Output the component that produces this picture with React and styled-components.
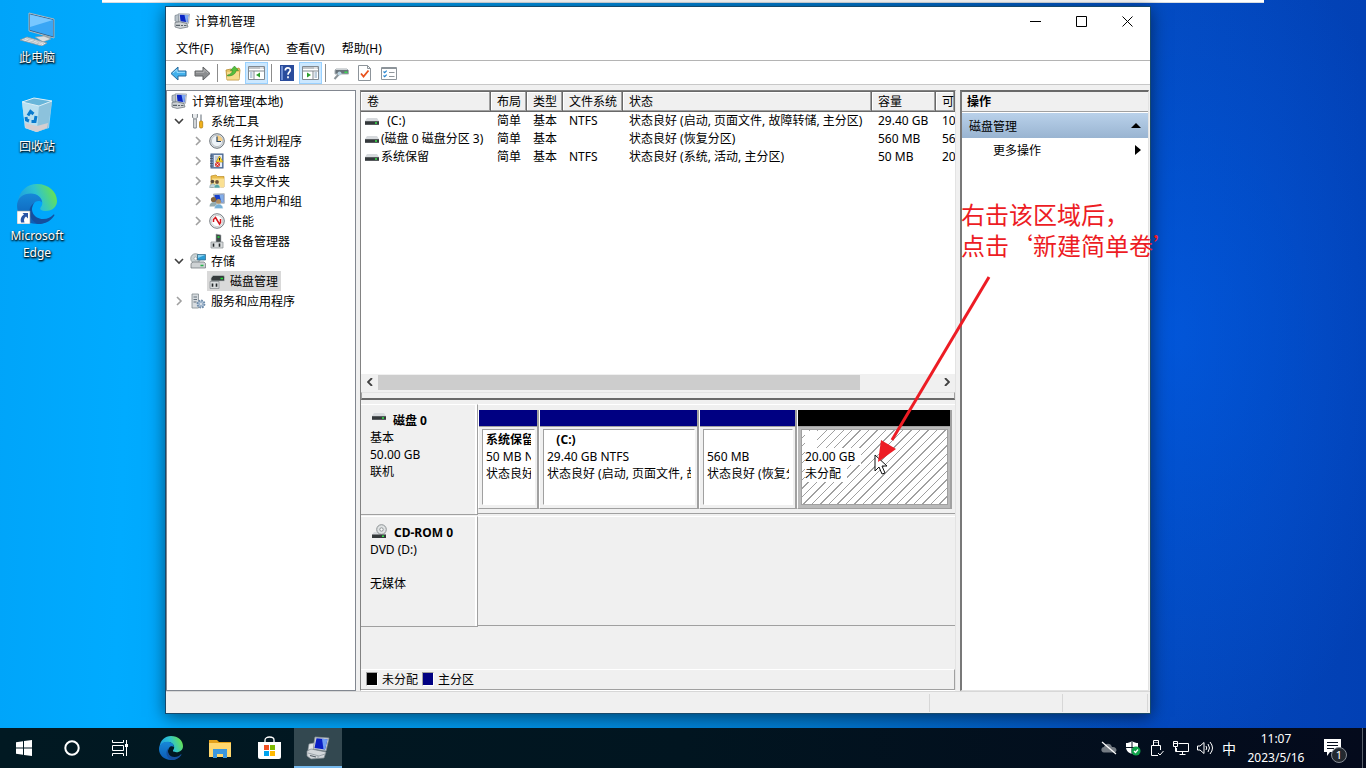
import React from "react";
import styled, { createGlobalStyle } from "styled-components";

const GlobalStyle = createGlobalStyle`
  * {
    box-sizing: border-box;
  }
  body {
    margin: 0;
    font-family: "Noto Sans", "Noto Sans CJK SC", sans-serif;
    font-size: 12px;
    color: #000;
  }
  button {
    font: inherit;
    color: inherit;
    border: 0;
    padding: 0;
    background: none;
  }
  svg {
    display: block;
    flex: none;
  }
`;

/* ---------- desktop ---------- */

const Screen = styled.div`
  min-height: 100vh;
  display: flex;
  flex-direction: column;
`;

const Desktop = styled.main`
  position: relative;
  flex: 1;
  min-height: 640px;
  overflow: hidden;
  background: radial-gradient(
      ellipse 260px 420px at 86% 46%,
      rgba(0, 100, 245, 0.5),
      transparent
    ),
    linear-gradient(
      92deg,
      #00a4f9 0%,
      #00abff 10%,
      #0098ea 32%,
      #0078cc 60%,
      #0348bc 84%,
      #0240b4 100%
    );
`;

const TopStrip = styled.div`
  height: 3px;
  margin: 0 102px;
  background: #fff;
  border-bottom: 1px solid #d8dde2;
`;

const Shortcuts = styled.nav`
  width: 74px;
  display: flex;
  flex-direction: column;
  gap: 21px;
  padding-top: 3px;
`;

const Shortcut = styled.button`
  min-height: 68px;
  display: flex;
  flex-direction: column;
  align-items: center;
  gap: 3px;
  color: #fff;
  line-height: 17px;
  text-shadow: 1px 1px 2px #000, 0 1px 2px #000;
`;

const Annotation = styled.p`
  position: absolute;
  top: 191px;
  right: -30px;
  width: 219px;
  margin: 0;
  color: #ed1c24;
  font-family: "Noto Sans CJK SC", sans-serif;
  font-size: 24px;
  line-height: 31px;
  white-space: nowrap;
`;

const Pointer = styled.svg`
  position: absolute;
  top: 264px;
  right: 156px;
`;

/* ---------- window ---------- */

const Window = styled.section`
  position: absolute;
  top: 6px;
  right: 215px;
  bottom: 14px;
  left: 165px;
  display: flex;
  flex-direction: column;
  background: #f0f0f0;
  border: 1px solid #17496b;
  box-shadow: 0 3px 16px rgba(0, 0, 0, 0.5);
`;

const TitleBar = styled.header`
  height: 30px;
  display: flex;
  align-items: center;
  gap: 5px;
  padding: 0 0 2px 8px;
  background: #fff;
`;

const Title = styled.h1`
  flex: 1;
  margin: 0;
  font-size: 12px;
  font-weight: 400;
`;

const CaptionButton = styled.button`
  width: 46px;
  height: 28px;
  margin-left: -5px;
  display: grid;
  place-items: center;
`;

const MenuBar = styled.nav`
  height: 23px;
  display: flex;
  gap: 1px;
  padding: 0 0 2px 2px;
  background: #fff;
`;

const MenuItem = styled.button`
  padding: 0 8px;
`;

const ToolBar = styled.div`
  height: 25px;
  display: flex;
  align-items: center;
  gap: 1px;
  padding: 1px 0 0 1px;
  background: #fff;
  border-top: 1px solid #b4b4b4;
  border-bottom: 1px solid #c8c8c8;
`;

const ToolButton = styled.button`
  width: 23px;
  height: 22px;
  display: grid;
  place-items: center;
  background: ${(props) => (props.$active ? "#cce8ff" : "transparent")};
  border: 1px solid ${(props) => (props.$active ? "#99d1ff" : "transparent")};
`;

const ToolSeparator = styled.span`
  width: 1px;
  height: 18px;
  margin: 0 2px;
  background: #8c8c8c;
`;

const Panes = styled.div`
  flex: 1;
  min-height: 0;
  display: grid;
  grid-template-columns: 190px minmax(0, 1fr) 189px;
  gap: 4px;
  padding: 5px 1px 0 0;
`;

const StatusBar = styled.footer`
  height: 22px;
  display: flex;
  justify-content: flex-end;
  padding: 2px 2px 1px 0;
  border-top: 1px solid #d7d7d7;
`;

const StatusCell = styled.span`
  width: ${(props) => props.$width}px;
  border-right: 1px solid #d7d7d7;
`;

/* ---------- tree ---------- */

const Tree = styled.ul`
  margin: 0;
  padding: 0;
  list-style: none;
  background: #fff;
  border: 1px solid #828790;
`;

const TreeRow = styled.li`
  height: 20px;
  display: flex;
  padding-left: ${(props) => (props.$level > 1 ? 21 : 2)}px;
`;

const Twisty = styled.button`
  width: 19px;
  display: grid;
  place-items: center;
`;

const TreeItem = styled.button`
  display: flex;
  align-items: center;
  gap: 5px;
  padding: 0 3px 0 2px;
  white-space: nowrap;
  background: ${(props) => (props.$selected ? "#d9d9d9" : "transparent")};
`;

/* ---------- volume list ---------- */

const Center = styled.div`
  display: flex;
  flex-direction: column;
  min-width: 0;
  border: 1px solid #828282;
  border-right-color: #e3e3e3;
  border-bottom-color: #fff;
`;

const VolumePane = styled.div`
  flex: 1;
  min-height: 120px;
  display: flex;
  flex-direction: column;
  justify-content: space-between;
  overflow: hidden;
  background: #fff;
  border-top: 1px solid #696969;
`;

const VolumeTable = styled.table`
  width: 100%;
  table-layout: fixed;
  border-collapse: separate;
  border-spacing: 0;
  white-space: nowrap;
`;

const HeadCell = styled.th`
  width: ${(props) => (props.$width ? `${props.$width}px` : "auto")};
  height: 20px;
  padding: 1px 0 0 6px;
  overflow: hidden;
  text-align: left;
  font-weight: 400;
  line-height: 18px;
  background: #f0f0f0;
  border-right: 1px solid #696969;
  border-bottom: 1px solid #696969;
  box-shadow: inset -1px -1px #a0a0a0, inset 1px 1px #fff;
`;

const Cell = styled.td`
  height: 18px;
  padding: 0 0 0 6px;
  overflow: hidden;
  line-height: 18px;
`;

const VolumeName = styled.td`
  height: 18px;
  padding: 0 0 0 4px;
  line-height: 18px;
  white-space: pre;

  svg {
    display: inline-block;
    vertical-align: -1px;
    margin-right: 2px;
  }
`;

const ScrollBar = styled.div`
  height: 16px;
  display: grid;
  grid-template-columns: 17px minmax(0, 1fr) 17px;
  align-items: center;
  background: #f0f0f0;
`;

const ScrollThumb = styled.div`
  width: 86%;
  height: 15px;
  background: #cdcdcd;
`;

const ScrollArrow = styled.button`
  display: grid;
  place-items: center;
`;

const Splitter = styled.div`
  height: 14px;
  padding-top: 2px;

  &::before {
    content: "";
    display: block;
    height: 5px;
    border: 1px solid #a0a0a0;
    border-top-color: #e3e3e3;
    border-bottom: 2px solid #696969;
  }
`;

/* ---------- disk map ---------- */

const DiskRow = styled.div`
  height: 112px;
  display: grid;
  grid-template-columns: 117px minmax(0, 1fr);
`;

const DiskLabel = styled.div`
  height: 111px;
  padding: 7px 0 0 9px;
  line-height: 17px;
  border-top: 1px solid #fff;
  border-right: 1px solid #a0a0a0;
  border-bottom: 1px solid #a0a0a0;
  box-shadow: inset -2px 0 #fff;
`;

const DiskName = styled.div`
  height: 17px;
  display: flex;
  gap: 7px;
  padding-left: 2px;
  font-weight: 700;
`;

const DiskLine = styled.div`
  height: 17px;
`;

const Partitions = styled.div`
  height: 110px;
  display: grid;
  grid-template-columns: 61fr 160fr 98fr 155fr;
  padding: 5px 3px 4px 0;
  border-top: 1px solid #fff;
  border-bottom: 1px solid #a0a0a0;
`;

const Partition = styled.div`
  min-width: 0;
  display: flex;
  flex-direction: column;
  border-right: 2px solid #a0a0a0;
  border-bottom: 1px solid #a0a0a0;
  border-left: 1px solid #fff;
  background: ${(props) => (props.$free ? "#bababa" : "#f0f0f0")};

  &::before {
    content: "";
    height: 16px;
    background: ${(props) => (props.$free ? "#000" : "#000082")};
    border-bottom: 1px solid #a0a0a0;
  }
`;

const PartitionBody = styled.div`
  flex: 1;
  margin: 2px 2px 3px 3px;
  padding: 1px 3px 0;
  overflow: hidden;
  white-space: pre;
  line-height: 17px;
  border: 1px solid #a0a0a0;
  border-right-color: ${(props) => (props.$free ? "#a0a0a0" : "#fff")};
  border-bottom-color: ${(props) => (props.$free ? "#a0a0a0" : "#fff")};
  background: ${(props) =>
    props.$free
      ? "repeating-linear-gradient(135deg, #fff 0 5px, #a0a0a0 5px 6px)"
      : "#fff"};
`;

const PartitionLine = styled.div`
  height: 17px;
  overflow: hidden;
  font-weight: ${(props) => (props.$bold ? 700 : 400)};

  span {
    display: inline-block;
    max-width: 100%;
    min-width: 12px;
    min-height: 17px;
    padding-right: ${(props) => (props.$free ? 6 : 0)}px;
    overflow: hidden;
    vertical-align: top;
    background: #fff;
  }
`;

const Filler = styled.div`
  min-height: 41px;
`;

const Legend = styled.div`
  height: 21px;
  display: flex;
  align-items: center;
  gap: 4px;
  padding: 0 0 1px 5px;
  border-top: 1px solid #fff;
  border-right: 1px solid #a0a0a0;
  border-bottom: 1px solid #a0a0a0;
`;

const Swatch = styled.i`
  width: 12px;
  height: 14px;
  background: ${(props) => props.$color};
  border: 1px solid #a0a0a0;
  border-right-color: #fff;
  border-bottom-color: #fff;
`;

/* ---------- actions pane ---------- */

const Actions = styled.aside`
  background: #fff;
  border: 1px solid #e3e3e3;
  border-top: 2px solid #696969;
  border-left: 2px solid #787878;
`;

const ActionsTitle = styled.h2`
  height: 20px;
  margin: 0 0 1px;
  padding-left: 5px;
  font-size: 12px;
  line-height: 20px;
  background: #f0f0f0;
  border-bottom: 1px solid #a0a0a0;
`;

const ActionRow = styled.button`
  width: 100%;
  height: ${(props) => (props.$heading ? 25 : 24)}px;
  display: flex;
  align-items: center;
  justify-content: space-between;
  padding: 0 7px 0 ${(props) => (props.$heading ? 7 : 31)}px;
  background: ${(props) =>
    props.$heading ? "linear-gradient(#b9d1ea, #99b4d1)" : "transparent"};
`;

/* ---------- taskbar ---------- */

const TaskBar = styled.footer`
  height: 40px;
  display: flex;
  justify-content: space-between;
  color: #fff;
  background: linear-gradient(90deg, #011922, #011520 50%, #040a1c);
`;

const TaskGroup = styled.div`
  display: flex;
`;

const TaskApps = styled.div`
  display: flex;
  gap: 1px;
  padding-left: 3px;
`;

const TaskButton = styled.button`
  width: 48px;
  height: 40px;
  display: grid;
  place-items: center;
  background: ${(props) => (props.$active ? "#334850" : "transparent")};
  box-shadow: ${(props) => (props.$active ? "inset 0 -2px #76b9ed" : "none")};
`;

const TrayButton = styled.button`
  width: 24px;
  display: grid;
  place-items: center;
  font-size: 14px;
`;

const Clock = styled.time`
  width: 70px;
  padding-top: 1px;
  text-align: center;
  line-height: 19px;
`;

const Notices = styled.button`
  position: relative;
  width: 52px;
  padding-left: 13px;
  border-right: 1px solid #59606b;
  margin-right: 3px;
`;

const NoticeCount = styled.span`
  position: absolute;
  top: 19px;
  left: 20px;
  width: 16px;
  height: 16px;
  border-radius: 8px;
  border: 1px solid #858b94;
  background: #23282f;
  font-size: 11px;
  line-height: 14px;
  text-align: center;
`;

/* ---------- icons ---------- */

const ComputerIcon = ({ size = 16 }) => (
  <svg width={size} height={size} viewBox="0 0 16 16">
    <path d="M1 2.500l3.500-1v8L1 8z" fill="#b9c2c9" stroke="#74808a" strokeWidth=".7" />
    <path d="M4.500 .7L15.500 1l-1 9.300L5 9.300z" fill="#d8dde2" stroke="#8f989f" strokeWidth=".7" />
    <path d="M5.800 1.700l8.500.3-.8 7.200-7-.9z" fill="#0b25c4" />
    <path d="M10.500 1.900l3.800.1-.8 7.200-1.500-.2z" fill="#7fa9f2" />
    <path d="M1 9.500l5-.7 7 1.800 1 3.400-7.800 1.500L1 14z" fill="#cfd3d6" stroke="#666f76" strokeWidth=".7" />
    <path d="M2 12.300h4M7 12.500h2M10 12.500h2.500" stroke="#59636b" strokeWidth="1.200" />
  </svg>
);

const TaskComputerIcon = () => (
  <svg width="24" height="24" viewBox="0 0 24 24">
    <path d="M9 1l14 1-3 13-13-2z" fill="#c9d0d5" stroke="#8b959c" strokeWidth=".7" />
    <path d="M10.500 2.300l11 .9-2.500 10.300-10.500-1.500z" fill="#0a1fc4" />
    <path d="M16 2.800l5.500.4-2.500 10.300-1.500-.2z" fill="#6f9cf2" />
    <path d="M3 8l5-1-1 8-5-1z" fill="#dfe3e6" stroke="#8b959c" strokeWidth=".6" />
    <path d="M1 15l4-2 15 3-2 6-13 1-4-3z" fill="#d3d7da" stroke="#7d868c" strokeWidth=".7" />
    <path d="M2 17l11 3 6-2M12 20v2.500" fill="none" stroke="#8b959c" strokeWidth=".8" />
    <path d="M4 19.500l6 1.500" stroke="#545e66" strokeWidth="1.200" />
  </svg>
);

const ToolsIcon = () => (
  <svg width="16" height="16" viewBox="0 0 16 16">
    <path d="M2.500 1v3.500L5 6.300l2.400-1.800V1M3.700 6v9h2.600V6" fill="#e8eaec" stroke="#7d848a" />
    <path d="M11 1.500v6.500" stroke="#9aa1a7" strokeWidth="1.600" />
    <rect x="9.500" y="8" width="3.200" height="7" rx="1.300" fill="#f0b11d" stroke="#ab7706" strokeWidth=".7" />
  </svg>
);

const ClockIcon = () => (
  <svg width="16" height="16" viewBox="0 0 16 16">
    <circle cx="8" cy="8" r="7.300" fill="#dde2e6" stroke="#6c7379" />
    <circle cx="8" cy="8" r="5.600" fill="#eef3f8" stroke="#9da4aa" strokeWidth=".6" />
    <path d="M8 8V2.400A5.600 5.600 0 0 1 13.600 8z" fill="#f6cf85" />
    <path d="M8 3.500V8.500h4" fill="none" stroke="#28435f" strokeWidth="1.200" />
  </svg>
);

const EventIcon = () => (
  <svg width="16" height="16" viewBox="0 0 16 16">
    <rect x="2" y="1" width="12" height="14" fill="#7994bb" stroke="#425e88" />
    <path d="M5 2h8v12H5z" fill="#e8edf3" />
    <path d="M1 3h3M1 5.500h3M1 8h3M1 10.500h3M1 13h3" stroke="#3d4d62" strokeWidth=".8" />
    <path d="M6 4h5M6 6h3M6 8h3" stroke="#8c9aac" strokeWidth=".8" />
    <path d="M10.500 3l3.500 6H7z" fill="#ffdc35" stroke="#ad8500" strokeWidth=".6" />
    <path d="M10.500 5v2.500" stroke="#222" />
    <circle cx="8.500" cy="11.500" r="2.500" fill="#d83832" />
    <path d="M7.500 10.500l2 2m0-2l-2 2" stroke="#fff" strokeWidth=".8" />
  </svg>
);

const SharedIcon = () => (
  <svg width="16" height="16" viewBox="0 0 16 16">
    <path d="M2 3l5-1 1.500 1.500H15V14H2z" fill="#eabd4d" stroke="#bc8c25" strokeWidth=".7" />
    <path d="M3 5.500h12V14H3z" fill="#fae092" />
    <circle cx="3.500" cy="8.500" r="1.800" fill="#55483b" />
    <path d="M.7 14.500c0-5 6-5 6 0z" fill="#c0d5dc" stroke="#6c878f" strokeWidth=".5" />
    <circle cx="8" cy="9" r="1.900" fill="#6e5339" />
    <path d="M5 15c0-5 6-5 6 0z" fill="#56a5a5" stroke="#e5eeee" strokeWidth=".5" />
  </svg>
);

const UsersIcon = () => (
  <svg width="16" height="16" viewBox="0 0 16 16">
    <path d="M4.500 1l10.800-.3v9.600L6 10z" fill="#b7c2ce" stroke="#7f8b97" strokeWidth=".6" />
    <path d="M5.500 2l8.800-.3v7.500L6.500 9z" fill="#1740cd" />
    <path d="M10.500 1.900l3.800-.2v7.500l-2-.1z" fill="#82afe9" />
    <circle cx="4.500" cy="6.500" r="2.600" fill="#81623c" />
    <path d="M.5 13.500c0-6 8-6 8 0z" fill="#93abaf" />
    <circle cx="9.500" cy="8.500" r="2.500" fill="#b09062" />
    <path d="M5.500 15.500c0-6 8.500-6 8.500 0z" fill="#74afd6" stroke="#dceaf4" strokeWidth=".5" />
  </svg>
);

const PerfIcon = () => (
  <svg width="16" height="16" viewBox="0 0 16 16">
    <circle cx="8" cy="8" r="7.300" fill="#eceeef" stroke="#777d82" />
    <circle cx="8" cy="8" r="5.600" fill="#fff" stroke="#b6babd" strokeWidth=".6" />
    <path d="M4.500 9V6.500L6.500 4.500l4 6.500 1-1.500V6" fill="none" stroke="#d4141c" strokeWidth="1.500" />
  </svg>
);

const DeviceIcon = ({ green }) => (
  <svg width="16" height="16" viewBox="0 0 16 16">
    {green ? (
      <path d="M2 5l2-2.500h11l.5 2V8H2z" fill="#363c3d" stroke="#bfc5c6" strokeWidth=".7" />
    ) : (
      <path d="M7 1l5 1v8H7z" fill="#414748" stroke="#aab0b1" strokeWidth=".6" />
    )}
    <path d={green ? "M11.500 5.500h2.500" : "M8.500 4h2"} stroke="#22e53c" strokeWidth="1.500" />
    <path d={green ? "M1 8.500h9v7H1z" : "M2 9h12v6H2z"} fill="#d9dcdd" stroke="#858b8e" strokeWidth=".7" />
    <path
      d={green ? "M3.500 10.500v3.200M7.500 10.500v3.200" : "M4.500 10.500v3.200M10.500 10.500v3.200"}
      stroke="#24282a"
      strokeWidth="1.600"
    />
  </svg>
);

const StorageIcon = () => (
  <svg width="16" height="16" viewBox="0 0 16 16">
    <circle cx="5.500" cy="5.500" r="4.800" fill="#c9d2d4" stroke="#7f898d" strokeWidth=".7" />
    <circle cx="5.500" cy="5.500" r="1.500" fill="#fff" stroke="#7f898d" strokeWidth=".5" />
    <path d="M7.500 1.500h8v5.500h-8z" fill="#2a9cd4" stroke="#356681" strokeWidth=".7" />
    <path d="M8 2h7l-7 3z" fill="#8ad1ef" />
    <path d="M1 10.500l2-1.500h11l1.500 1.500V15H1z" fill="#ced2d4" stroke="#687074" strokeWidth=".7" />
    <path d="M10.500 12.500h3" stroke="#25b749" strokeWidth="1.500" />
  </svg>
);

const ServiceIcon = () => (
  <svg width="16" height="16" viewBox="0 0 16 16">
    <path d="M2 1h6.500v14H2z" fill="#d7dce0" stroke="#818a91" strokeWidth=".8" />
    <path d="M3.500 4h3.500M3.500 6.500h3.500M3.500 9h3" stroke="#66727d" />
    <circle cx="11" cy="11" r="3.500" fill="#b1c5d9" stroke="#6f8caa" strokeWidth="1.800" strokeDasharray="1.700 1" />
    <circle cx="11" cy="11" r="1.400" fill="#fff" stroke="#6f8caa" strokeWidth=".6" />
  </svg>
);

const DriveIcon = () => (
  <svg width="14" height="9" viewBox="0 0 14 9">
    <path d="M2 1h10l2 3H0z" fill="#d7dadd" />
    <path d="M0 4h14v4H0z" fill="#a8adb1" />
    <path d="M0 4.300h14v3.400H0z" fill="#34393b" />
    <path d="M10 6h2" stroke="#35e64b" strokeWidth="1.600" />
  </svg>
);

const CdIcon = () => (
  <svg width="15" height="16" viewBox="0 0 15 16">
    <path d="M2 8h11l1 3H0z" fill="#d7dadd" />
    <circle cx="9.500" cy="5.500" r="4.800" fill="#dfe2e3" stroke="#8b9193" />
    <circle cx="9.500" cy="5.500" r="1.700" fill="#fff" stroke="#8b9193" />
    <path d="M0 10.500h14v3.500H0z" fill="#34393b" />
    <path d="M10 12.300h2" stroke="#35e64b" strokeWidth="1.600" />
  </svg>
);

const ArrowIcon = ({ back }) => (
  <svg width="17" height="15" viewBox="0 0 17 15">
    <path
      d={back ? "M8 1L1 7.500 8 14v-4h8V5H8z" : "M9 1l7 6.500L9 14v-4H1V5h8z"}
      fill={back ? "#43b1ec" : "#8b8d8f"}
      stroke={back ? "#28699b" : "#626466"}
    />
    <path d={back ? "M3 7l4-3.500V6.300h8" : "M2 6.300h8V3.500L14 7"} fill="none" stroke={back ? "#a5e0ff" : "#b4b5b6"} />
  </svg>
);

const FolderUpIcon = () => (
  <svg width="16" height="16" viewBox="0 0 16 16">
    <path d="M1 5l5-1 1 1 7-2 1 2-1 10H2z" fill="#eac566" stroke="#b68c2c" strokeWidth=".8" />
    <path d="M2 7h12v7.500H2z" fill="#f6dc8c" />
    <path d="M2.500 10c3-.5 4.500-2 5-4.500H5.300L9.500 1l4 4.500h-2.300c-.6 3.500-3.500 5.500-8.700 5.500z" fill="#55be3c" stroke="#2c8125" strokeWidth=".5" />
  </svg>
);

const PanelIcon = ({ right }) => (
  <svg width="17" height="16" viewBox="0 0 17 16">
    <path d="M.5 1.500h16v13H.5z" fill="#fff" stroke="#818991" />
    <path d="M1 3h15M1 6h15" stroke="#818991" />
    <path d="M12 3h3" stroke="#fff" />
    <path d={right ? "M11 6v8" : "M6 6v8"} stroke="#818991" />
    <path d={right ? "M5 7.500v5L9 10z" : "M12 7.500v5L8 10z"} fill="#2ca02c" />
    <path
      d={right ? "M12.500 8h2.500M12.500 10h2.500M12.500 12h2.500" : "M2 8h2.500M2 10h2.500M2 12h2.500"}
      stroke="#7899b7"
    />
  </svg>
);

const HelpIcon = () => (
  <svg width="14" height="16" viewBox="0 0 14 16">
    <path d="M0 0h14v16H0z" fill="#2a4c9c" />
    <path d="M1 1h2v14H1z" fill="#6f8dd0" />
    <path d="M5.300 5.500c0-3.500 5-3.500 5-.5 0 2.200-2.300 2.200-2.300 4.800M8 11.300v2" fill="none" stroke="#fff" strokeWidth="1.700" />
  </svg>
);

const RescanIcon = () => (
  <svg width="16" height="16" viewBox="0 0 16 16">
    <path d="M3 4h11l1.500 1.500V9H2V5.500z" fill="#67727a" stroke="#a9b0b4" />
    <path d="M3 4.500h11" stroke="#ccd1d4" />
    <path d="M11.500 7.300h3" stroke="#3bdc51" strokeWidth="1.600" />
    <path d="M6 9L1.500 14" stroke="#8b9499" strokeWidth="2" />
    <circle cx="6.500" cy="8.500" r="2" fill="#b9d2e0" />
  </svg>
);

const CheckPageIcon = () => (
  <svg width="13" height="16" viewBox="0 0 13 16">
    <path d="M.5.5h9l3 3v12H.5z" fill="#fff" stroke="#8d949a" />
    <path d="M9.500.5v3h3" fill="none" stroke="#8d949a" />
    <path d="M3 8.500l2.500 3 5-6" fill="none" stroke="#e9521d" strokeWidth="1.800" />
  </svg>
);

const ListIcon = () => (
  <svg width="16" height="13" viewBox="0 0 16 13">
    <path d="M.5.500h15v12H.500z" fill="#fff" stroke="#8d949a" />
    <path d="M1 1.500h14" stroke="#8d949a" />
    <path d="M2.500 4.500l1.200 1.200 2-2M2.500 8.500l1.200 1.200 2-2" fill="none" stroke="#2785cf" strokeWidth="1.200" />
    <path d="M8 5.500h5.500M8 9.500h5.500" stroke="#90979c" />
  </svg>
);

const Chevron = ({ open }) => (
  <svg width="10" height="10" viewBox="0 0 10 10">
    <path
      d={open ? "M1 3l4 4 4-4" : "M3 1l4 4-4 4"}
      fill="none"
      stroke={open ? "#404040" : "#a0a0a0"}
      strokeWidth="1.600"
    />
  </svg>
);

const EdgeIcon = ({ size, id, shortcut }) => (
  <svg width={size} height={size} viewBox="0 0 40 40">
    <defs>
      <linearGradient id={`${id}a`} x1="0" y1=".6" x2="1" y2=".3">
        <stop offset="0" stopColor="#1b9de2" />
        <stop offset=".5" stopColor="#2fc3cf" />
        <stop offset="1" stopColor="#6be547" />
      </linearGradient>
      <linearGradient id={`${id}b`} x1="0" y1="0" x2="0" y2="1">
        <stop offset="0" stopColor="#1788d8" />
        <stop offset="1" stopColor="#0c5bb5" />
      </linearGradient>
    </defs>
    <path d="M1 18C2 7 10 0 20 0c12 0 20 8 20 17 0 6-5 10-11 10-5 0-7-2-5-4 4-5-1-13-9-13-6 0-11 3-14 8z" fill={`url(#${id}a)`} />
    <path d="M0 22C0 14 6 9.500 14 9.500c6 0 11 4 11 9-2-2-6-2-8 1-6 8 2 20 13 18-3 2-6 2.500-10 2.500C8 40 0 31 0 22z" fill={`url(#${id}b)`} />
    <path d="M17 19c-5 7 0 16 9 16 5 0 8-2 10-4 1-1 2 0 1 1-4 6-10 8-16 8-9-4-12-15-4-21z" fill="#154f9e" />
    {shortcut && (
      <g>
        <path d="M0 27h13v13H0z" fill="#fff" stroke="#8f9499" strokeWidth=".6" />
        <path d="M5.500 29H11v5.500l-2-2c-2 1.500-2.500 3.500-1.500 6H4c-1-3.500 0-6 3-8z" fill="#2a55a5" />
      </g>
    )}
  </svg>
);

const PcIcon = () => (
  <svg width="40" height="40" viewBox="0 0 40 40">
    <path d="M12 7l25 6v19l-25-7z" fill="#355a7d" stroke="#aab9c4" />
    <path d="M13 8.500l23 5.500v16.500L13 24z" fill="#39a6f5" />
    <path d="M13 8.500l23 5.500-23 7z" fill="#78c7ff" />
    <path d="M26 29l-1 3 6 2 3-3z" fill="#9ea8ae" />
    <path d="M18 31l9-1 7 3-8 3z" fill="#d9dee1" stroke="#8a9398" strokeWidth=".6" />
    <path d="M3 34l7-3 20 6-5 3z" fill="#e8ebed" stroke="#89939a" strokeWidth=".8" />
    <path d="M6 33l19 5.500M9 32l18 5.500M9 35.500l5-3.500M14 37l5-3.500M19 38.500l4-3.500" stroke="#aeb6bb" strokeWidth=".7" />
  </svg>
);

const BinIcon = () => (
  <svg width="40" height="40" viewBox="0 0 40 40">
    <path d="M5 7l12-4 18 3-3 27-13 4-11-4z" fill="#9ed3ee" />
    <path d="M5 7l17 4-2 26-12-4z" fill="#b8dff0" />
    <path d="M22 11l13-5-4 27-11 4z" fill="#8cc2dc" />
    <path d="M8 28l12 3 11-3-1 5-10 4-11-4z" fill="#d5ced0" />
    <path d="M5 7l12-4 18 3-13 5z" fill="#68b6da" stroke="#dceff7" />
    <path d="M11 20.500l2.500-4 3 2.500M19 21l-1 5.500h-3.500M12 26l-2.500-1-.5-3" fill="none" stroke="#087ace" strokeWidth="3" />
  </svg>
);

const StartIcon = () => (
  <svg width="16" height="16" viewBox="0 0 16 16">
    <path d="M0 2.300L7 1.200V7.500H0zM8 1l8-1v7.500H8zM0 8.500h7v6.300l-7-1zM8 8.500h8V16l-8-1z" fill="#fff" />
  </svg>
);

const CortanaIcon = () => (
  <svg width="16" height="16" viewBox="0 0 16 16">
    <circle cx="8" cy="8" r="6.700" fill="none" stroke="#fff" strokeWidth="2" />
  </svg>
);

const TaskViewIcon = () => (
  <svg width="17" height="16" viewBox="0 0 17 16">
    <path d="M.5 0v2.500h11V0M.5 5.500h11v5H.500zM.5 16v-2.500h11V16M14.500 0v16" fill="none" stroke="#fff" />
    <path d="M13 4h3v3h-3z" fill="#fff" />
  </svg>
);

const ExplorerIcon = () => (
  <svg width="22" height="19" viewBox="0 0 22 19">
    <path d="M0 1h8l2 2h12v15H0z" fill="#e4a11b" />
    <path d="M0 4h22v14H0z" fill="#ffd76e" />
    <path d="M4 10h14v9h-4v-4H8v4H4z" fill="#3a97de" />
  </svg>
);

const StoreIcon = () => (
  <svg width="23" height="24" viewBox="0 0 23 24">
    <path d="M7 7V4c0-4 9-4 9 0v3" fill="none" stroke="#fff" strokeWidth="1.300" />
    <path d="M0 6h23v15q0 2-2 2H2q-2 0-2-2z" fill="#fff" />
    <path d="M6 9h5v5H6z" fill="#f25022" />
    <path d="M12 9h5v5h-5z" fill="#7fba00" />
    <path d="M6 15h5v5H6z" fill="#00a4ef" />
    <path d="M12 15h5v5h-5z" fill="#ffb900" />
  </svg>
);

const CloudOffIcon = () => (
  <svg width="16" height="14" viewBox="0 0 16 14">
    <path d="M3 11.500c-4-1-3-5.500 0-5.500 1-4.500 7-4.500 8 0 5-1 6 5.500 2 5.500z" fill="#747b83" />
    <path d="M1 1l14 12" stroke="#fff" strokeWidth="1.200" />
  </svg>
);

const ShieldIcon = () => (
  <svg width="16" height="16" viewBox="0 0 16 16">
    <path d="M7 1c2 1.500 4 2 6 2v4c0 4-3 6-6 7-3-1-6-3-6-7V3c2 0 4-.5 6-2z" fill="#fff" />
    <path d="M7 1v13M1 7.500h12" stroke="#0b1824" />
    <circle cx="11" cy="11" r="4.500" fill="#10a34a" />
    <path d="M9 11l1.500 1.500L13 9.500" fill="none" stroke="#fff" strokeWidth="1.200" />
  </svg>
);

const UsbIcon = () => (
  <svg width="14" height="16" viewBox="0 0 14 16">
    <path d="M3.500 5V.500h5V5M1.500 15.500V5.500h9V10M1.500 15.500H8" fill="none" stroke="#fff" />
    <path d="M4.500 2.500h1M6.500 2.500h1" stroke="#fff" />
    <path d="M8 13l2 2 3.500-4" fill="none" stroke="#fff" />
  </svg>
);

const NetworkIcon = () => (
  <svg width="16" height="15" viewBox="0 0 16 15">
    <path d="M5.500 2.500h10v8H3.500V7M9.500 10.500v3M6.500 13.500h6M.5.500h4v5h-4zM2.500 5.500v5h2" fill="none" stroke="#fff" />
    <path d="M1 2.500h3" stroke="#fff" />
  </svg>
);

const SoundIcon = () => (
  <svg width="17" height="14" viewBox="0 0 17 14">
    <path d="M.5 5h2.500L7 1.500v11L3 9H.500zM9 5q1.500 2 0 4M11 3q3 4 0 8M13 1q5 6 0 12" fill="none" stroke="#fff" />
  </svg>
);

const NoticeIcon = () => (
  <svg width="17" height="18" viewBox="0 0 17 18">
    <path d="M0 0h17v13H6l-3 4v-4H0z" fill="#fff" />
    <path d="M3 3.500h11M3 6.500h11M3 9.500h7" stroke="#050d1d" strokeWidth="1.200" />
  </svg>
);

/* ---------- data ---------- */

const treeNodes = [
  { label: "计算机管理(本地)", level: 0, icon: <ComputerIcon /> },
  { label: "系统工具", level: 1, open: true, icon: <ToolsIcon /> },
  { label: "任务计划程序", level: 2, icon: <ClockIcon /> },
  { label: "事件查看器", level: 2, icon: <EventIcon /> },
  { label: "共享文件夹", level: 2, icon: <SharedIcon /> },
  { label: "本地用户和组", level: 2, icon: <UsersIcon /> },
  { label: "性能", level: 2, icon: <PerfIcon /> },
  { label: "设备管理器", level: 2, leaf: true, icon: <DeviceIcon /> },
  { label: "存储", level: 1, open: true, icon: <StorageIcon /> },
  { label: "磁盘管理", level: 2, leaf: true, selected: true, icon: <DeviceIcon green /> },
  { label: "服务和应用程序", level: 1, icon: <ServiceIcon /> },
];

const columns = [
  ["卷", 130],
  ["布局", 36],
  ["类型", 36],
  ["文件系统", 60],
  ["状态", 249],
  ["容量", 64],
  ["可..."],
];

const volumes = [
  ["  (C:)", "简单", "基本", "NTFS", "状态良好 (启动, 页面文件, 故障转储, 主分区)", "29.40 GB", "10"],
  ["(磁盘 0 磁盘分区 3)", "简单", "基本", "", "状态良好 (恢复分区)", "560 MB", "56"],
  ["系统保留", "简单", "基本", "NTFS", "状态良好 (系统, 活动, 主分区)", "50 MB", "20"],
];

const partitions = [
  { name: "系统保留", size: "50 MB NTFS", state: "状态良好 (系统, 活动, 主分区)" },
  { name: "   (C:)", size: "29.40 GB NTFS", state: "状态良好 (启动, 页面文件, 故障转储, 主分区)" },
  { name: "", size: "560 MB", state: "状态良好 (恢复分区)" },
  { name: "", size: "20.00 GB", state: "未分配", free: true },
];

const menus = ["文件(F)", "操作(A)", "查看(V)", "帮助(H)"];

/* ---------- parts ---------- */

const NavTree = () => (
  <Tree>
    {treeNodes.map((node) => (
      <TreeRow key={node.label} $level={node.level}>
        {node.level > 0 && (
          <Twisty aria-label={node.label}>
            {!node.leaf && <Chevron open={node.open} />}
          </Twisty>
        )}
        <TreeItem $selected={node.selected}>
          {node.icon}
          {node.label}
        </TreeItem>
      </TreeRow>
    ))}
  </Tree>
);

const VolumeList = () => (
  <VolumePane>
    <VolumeTable>
      <thead>
        <tr>
          {columns.map(([label, width]) => (
            <HeadCell key={label} $width={width}>
              {label}
            </HeadCell>
          ))}
        </tr>
      </thead>
      <tbody>
        {volumes.map(([name, ...cells]) => (
          <tr key={name}>
            <VolumeName>
              <DriveIcon />
              {name}
            </VolumeName>
            {cells.map((cell, i) => (
              <Cell key={i}>{cell}</Cell>
            ))}
          </tr>
        ))}
      </tbody>
    </VolumeTable>
    <ScrollBar>
      <ScrollArrow aria-label="向左滚动">
        <svg width="6" height="8" viewBox="0 0 6 8">
          <path d="M5 0L1 4l4 4" fill="none" stroke="#404040" strokeWidth="1.800" />
        </svg>
      </ScrollArrow>
      <ScrollThumb />
      <ScrollArrow aria-label="向右滚动">
        <svg width="6" height="8" viewBox="0 0 6 8">
          <path d="M1 0l4 4-4 4" fill="none" stroke="#404040" strokeWidth="1.800" />
        </svg>
      </ScrollArrow>
    </ScrollBar>
  </VolumePane>
);

const DiskMap = () => (
  <>
    <DiskRow>
      <DiskLabel>
        <DiskName>
          <DriveIcon />
          磁盘 0
        </DiskName>
        <DiskLine>基本</DiskLine>
        <DiskLine>50.00 GB</DiskLine>
        <DiskLine>联机</DiskLine>
      </DiskLabel>
      <Partitions>
        {partitions.map((part) => (
          <Partition key={part.size} $free={part.free}>
            <PartitionBody $free={part.free}>
              <PartitionLine $bold>
                <span>{part.name}</span>
              </PartitionLine>
              <PartitionLine $free={part.free}>
                <span>{part.size}</span>
              </PartitionLine>
              <PartitionLine $free={part.free}>
                <span>{part.state}</span>
              </PartitionLine>
            </PartitionBody>
          </Partition>
        ))}
      </Partitions>
    </DiskRow>
    <DiskRow>
      <DiskLabel>
        <DiskName>
          <CdIcon />
          CD-ROM 0
        </DiskName>
        <DiskLine>DVD (D:)</DiskLine>
        <DiskLine />
        <DiskLine>无媒体</DiskLine>
      </DiskLabel>
      <Partitions />
    </DiskRow>
    <Filler />
    <Legend>
      <Swatch $color="#000" />
      未分配
      <Swatch $color="#000082" />
      主分区
    </Legend>
  </>
);

const ActionsPane = () => (
  <Actions>
    <ActionsTitle>操作</ActionsTitle>
    <ActionRow $heading>
      磁盘管理
      <svg width="10" height="5" viewBox="0 0 10 5">
        <path d="M0 5l5-5 5 5z" />
      </svg>
    </ActionRow>
    <ActionRow>
      更多操作
      <svg width="6" height="10" viewBox="0 0 6 10">
        <path d="M0 0l6 5-6 5z" />
      </svg>
    </ActionRow>
  </Actions>
);

const ManagementWindow = () => (
  <Window>
    <TitleBar>
      <ComputerIcon />
      <Title>计算机管理</Title>
      <CaptionButton aria-label="最小化">
        <svg width="11" height="11" viewBox="0 0 11 11">
          <path d="M0 5.500h11" stroke="#000" />
        </svg>
      </CaptionButton>
      <CaptionButton aria-label="最大化">
        <svg width="11" height="11" viewBox="0 0 11 11">
          <path d="M.5.500h10v10H.500z" fill="none" stroke="#000" />
        </svg>
      </CaptionButton>
      <CaptionButton aria-label="关闭">
        <svg width="11" height="11" viewBox="0 0 11 11">
          <path d="M.5.500l10 10m0-10l-10 10" stroke="#000" />
        </svg>
      </CaptionButton>
    </TitleBar>
    <MenuBar>
      {menus.map((menu) => (
        <MenuItem key={menu}>{menu}</MenuItem>
      ))}
    </MenuBar>
    <ToolBar>
      <ToolButton aria-label="后退"><ArrowIcon back /></ToolButton>
      <ToolButton aria-label="前进"><ArrowIcon /></ToolButton>
      <ToolSeparator />
      <ToolButton aria-label="上一级"><FolderUpIcon /></ToolButton>
      <ToolButton aria-label="显示控制台树" $active><PanelIcon /></ToolButton>
      <ToolSeparator />
      <ToolButton aria-label="帮助"><HelpIcon /></ToolButton>
      <ToolButton aria-label="显示操作窗格" $active><PanelIcon right /></ToolButton>
      <ToolSeparator />
      <ToolButton aria-label="重新扫描"><RescanIcon /></ToolButton>
      <ToolButton aria-label="检查"><CheckPageIcon /></ToolButton>
      <ToolButton aria-label="列表"><ListIcon /></ToolButton>
    </ToolBar>
    <Panes>
      <NavTree />
      <Center>
        <VolumeList />
        <Splitter />
        <DiskMap />
      </Center>
      <ActionsPane />
    </Panes>
    <StatusBar>
      <StatusCell $width={133} />
      <StatusCell $width={133} />
      <StatusCell $width={85} />
    </StatusBar>
    <Annotation>
      右击该区域后，
      <br />
      点击‘新建简单卷’
    </Annotation>
    <Pointer width="124" height="206" viewBox="0 0 124 206">
      <path d="M5 184v16l4-4 3 7 3-1-3-7h5z" fill="#fff" stroke="#111" />
      <path d="M119 6L22 169" stroke="#ed1c24" strokeWidth="3" />
      <path d="M8 191l3-22 15 9z" fill="#ed1c24" />
    </Pointer>
  </Window>
);

const Taskbar = () => (
  <TaskBar>
    <TaskGroup>
      <TaskButton aria-label="开始"><StartIcon /></TaskButton>
      <TaskButton aria-label="Cortana"><CortanaIcon /></TaskButton>
      <TaskButton aria-label="任务视图"><TaskViewIcon /></TaskButton>
      <TaskApps>
        <TaskButton aria-label="Microsoft Edge"><EdgeIcon size={24} id="task" /></TaskButton>
        <TaskButton aria-label="文件资源管理器"><ExplorerIcon /></TaskButton>
        <TaskButton aria-label="Microsoft Store"><StoreIcon /></TaskButton>
        <TaskButton aria-label="计算机管理" $active><TaskComputerIcon /></TaskButton>
      </TaskApps>
    </TaskGroup>
    <TaskGroup>
      <TrayButton aria-label="OneDrive"><CloudOffIcon /></TrayButton>
      <TrayButton aria-label="安全中心"><ShieldIcon /></TrayButton>
      <TrayButton aria-label="弹出设备"><UsbIcon /></TrayButton>
      <TrayButton aria-label="网络"><NetworkIcon /></TrayButton>
      <TrayButton aria-label="音量"><SoundIcon /></TrayButton>
      <TrayButton>中</TrayButton>
      <Clock>
        11:07
        <br />
        2023/5/16
      </Clock>
      <Notices aria-label="通知">
        <NoticeIcon />
        <NoticeCount>1</NoticeCount>
      </Notices>
    </TaskGroup>
  </TaskBar>
);

const App = () => (
  <Screen lang="zh-CN">
    <GlobalStyle />
    <Desktop>
      <TopStrip />
      <Shortcuts>
        <Shortcut><PcIcon />此电脑</Shortcut>
        <Shortcut><BinIcon />回收站</Shortcut>
        <Shortcut><EdgeIcon size={40} id="desk" shortcut />Microsoft Edge</Shortcut>
      </Shortcuts>
      <ManagementWindow />
    </Desktop>
    <Taskbar />
  </Screen>
);

export default App;
